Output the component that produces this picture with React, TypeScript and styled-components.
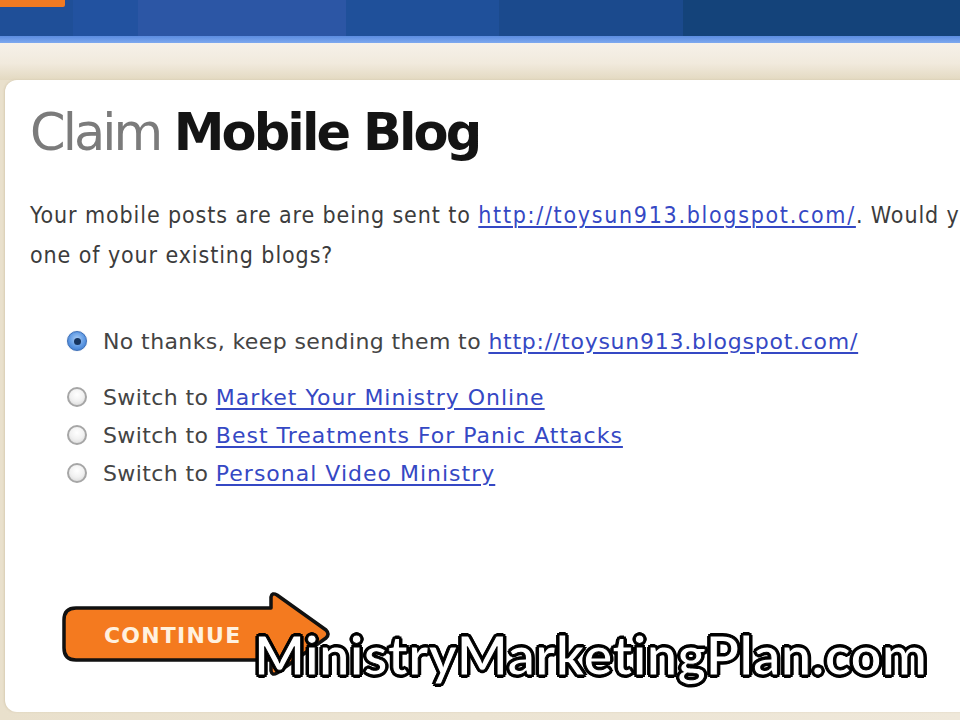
import React from "react";
import styled, { createGlobalStyle } from "styled-components";

const GlobalStyle = createGlobalStyle`
  html, body { margin: 0; padding: 0; background: #ece4d2; }
  #root { width: 960px; height: 720px; }
`;

const Page = styled.div`
  position: relative;
  width: 960px;
  height: 720px;
  overflow: hidden;
  display: flex;
  flex-direction: column;
  background: #ebe2cf;
  font-family: "DejaVu Sans", "Noto Sans", sans-serif;
`;

const TopBar = styled.div`
  display: flex;
  height: 36px;
  flex: none;
`;

const Segment = styled.div<{ $w: number; $c: string }>`
  width: ${(p) => p.$w}px;
  background: ${(p) => p.$c};
  flex: none;
`;

const OrangeTab = styled.div`
  width: 65px;
  height: 7px;
  background: #f07a22;
  border-bottom-right-radius: 2px;
`;

const BlueLine = styled.div`
  height: 7px;
  flex: none;
  background: linear-gradient(#5b8ce0, #7ea9ef);
`;

const Band = styled.div`
  height: 37px;
  flex: none;
  background: linear-gradient(#f6f1e9 0%, #f1eadd 55%, #e3d9c1 100%);
`;

const CardArea = styled.div`
  flex: 1;
  display: flex;
  padding: 0 0 8px 5px;
  background: linear-gradient(90deg, #e9e0cc, #efe8da);
`;

const Card = styled.div`
  flex: 1;
  background: #ffffff;
  border-radius: 12px 0 0 12px;
  padding: 21px 0 0 25px;
  display: flex;
  flex-direction: column;
  box-shadow: -1px 0 2px rgba(170, 150, 110, 0.25);
`;

const Title = styled.h1`
  margin: 0;
  font-size: 51px;
  line-height: 64px;
  font-weight: normal;
  color: #7b7b7b;
  white-space: nowrap;
  letter-spacing: -2.9px;
`;

const Strong = styled.span`
  color: #141414;
  font-weight: bold;
`;

const Intro = styled.p`
  margin: 30px 0 0 0;
  font-family: "DejaVu Sans Condensed", "Liberation Sans Narrow", "DejaVu Sans", sans-serif;
  font-size: 23px;
  line-height: 40px;
  color: #3c3c3c;
  white-space: nowrap;
  letter-spacing: 0.9px;
`;

const Link = styled.a<{ $ls?: number }>`
  color: #3548c4;
  text-decoration: underline;
  text-decoration-thickness: 1.5px;
  text-underline-offset: 3px;
  letter-spacing: ${(p) => p.$ls ?? 1}px;
  cursor: pointer;
`;

const Options = styled.div`
  margin: 47px 0 0 37px;
  display: flex;
  flex-direction: column;
`;

const OptionRow = styled.label<{ $gap?: number }>`
  display: flex;
  align-items: center;
  height: 38px;
  margin-bottom: ${(p) => p.$gap ?? 0}px;
  font-size: 22px;
  color: #444;
  white-space: nowrap;
  letter-spacing: 0.4px;
`;

const Radio = styled.span<{ $checked?: boolean }>`
  flex: none;
  width: 20px;
  height: 20px;
  box-sizing: border-box;
  border-radius: 50%;
  margin-right: 16px;
  display: flex;
  align-items: center;
  justify-content: center;
  ${(p) =>
    p.$checked
      ? `
    background: radial-gradient(circle at 50% 40%, #a9cdf7 0%, #5c97e2 55%, #3270c6 100%);
    border: 1px solid #3a6eb8;
    box-shadow: 0 0 1px rgba(40, 80, 150, 0.5);
  `
      : `
    background: radial-gradient(circle at 50% 35%, #ffffff 0%, #f1f1f1 50%, #d4d4d4 100%);
    border: 2px solid #a6a6a6;
  `}
`;

const Dot = styled.span`
  width: 7px;
  height: 7px;
  border-radius: 50%;
  background: #17355f;
`;

const ContinueButton = styled.button`
  position: relative;
  margin: 99px 0 0 31px;
  width: 272px;
  height: 90px;
  padding: 0 0 2px 43px;
  border: none;
  background: transparent;
  display: flex;
  align-items: center;
  cursor: pointer;
  align-self: flex-start;
`;

const ArrowShape = styled.svg`
  position: absolute;
  left: 0;
  top: 0;
  width: 272px;
  height: 90px;
`;

const ButtonLabel = styled.span`
  position: relative;
  font-family: "DejaVu Sans", sans-serif;
  font-weight: bold;
  font-size: 22px;
  color: #fff1df;
  letter-spacing: 1.2px;
`;

const Watermark = styled.div`
  position: absolute;
  left: 254px;
  top: 628px;
  font-family: "Lato", "Open Sans", sans-serif;
  font-weight: 700;
  font-size: 54px;
  line-height: 1;
  color: #ffffff;
  letter-spacing: 0.3px;
  white-space: nowrap;
  -webkit-text-stroke: 1px #000;
  text-shadow:
    2px 0 0 #000, -2px 0 0 #000, 0 2px 0 #000, 0 -2px 0 #000,
    2px 2px 0 #000, -2px -2px 0 #000, 2px -2px 0 #000, -2px 2px 0 #000,
    3px 0 0 #000, -3px 0 0 #000, 0 3px 0 #000, 0 -3px 0 #000;
`;

const segments = [
  { w: 73, c: "#1f4f98" },
  { w: 65, c: "#2252a0" },
  { w: 208, c: "#2c56a5" },
  { w: 153, c: "#1f509a" },
  { w: 184, c: "#1b4a8d" },
  { w: 277, c: "#14437a" },
];

const blogs = [
  "Market Your Ministry Online",
  "Best Treatments For Panic Attacks",
  "Personal Video Ministry",
];

export default function App() {
  return (
    <>
      <GlobalStyle />
      <Page>
        <TopBar>
          {segments.map((s, i) => (
            <Segment key={i} $w={s.w} $c={s.c}>
              {i === 0 && <OrangeTab />}
            </Segment>
          ))}
        </TopBar>
        <BlueLine />
        <Band />
        <CardArea>
          <Card>
            <Title>
              Claim <Strong>Mobile Blog</Strong>
            </Title>
            <Intro>
              Your mobile posts are are being sent to{" "}
              <Link $ls={1.7}>http://toysun913.blogspot.com/</Link>. Would you like to send them to
              <br />
              one of your existing blogs?
            </Intro>
            <Options>
              <OptionRow $gap={18}>
                <Radio $checked>
                  <Dot />
                </Radio>
                No thanks, keep sending them to&nbsp;
                <Link $ls={0.75}>http://toysun913.blogspot.com/</Link>
              </OptionRow>
              {blogs.map((b) => (
                <OptionRow key={b}>
                  <Radio />
                  Switch to&nbsp;<Link>{b}</Link>
                </OptionRow>
              ))}
            </Options>
            <ContinueButton>
              <ArrowShape viewBox="0 0 272 90">
                <path
                  d="M15,17 L210,17 L210,6 Q211,1 216,4 L265,39 Q269,43 265,47 L216,82 Q211,85 210,80 L210,69 L15,69 Q3,69 3,57 L3,29 Q3,17 15,17 Z"
                  fill="#f47a1f"
                  stroke="#111"
                  strokeWidth="3.5"
                  strokeLinejoin="round"
                />
              </ArrowShape>
              <ButtonLabel>CONTINUE</ButtonLabel>
            </ContinueButton>
          </Card>
        </CardArea>
        <Watermark>MinistryMarketingPlan.com</Watermark>
      </Page>
    </>
  );
}
